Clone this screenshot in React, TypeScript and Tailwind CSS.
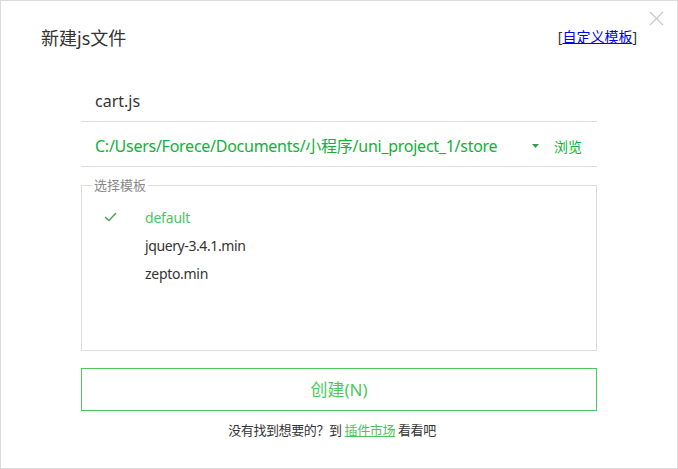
import React from "react";

const font = { fontFamily: '"Noto Sans", "Noto Sans CJK SC", sans-serif' };

export default function App() {
  return (
    <div
      className="relative w-[678px] h-[469px] bg-white border border-[#dcdcdc] overflow-hidden text-[#333]"
      style={font}
    >
      {/* close */}
      <button className="absolute right-[13px] top-[10px] w-[15px] h-[15px]">
        <svg width="15" height="15" viewBox="0 0 15 15">
          <path d="M1 1 L14 14 M14 1 L1 14" stroke="#c8c8c8" strokeWidth="1.2" fill="none" />
        </svg>
      </button>

      <div className="flex items-center justify-between pl-[40px] pr-[40px] pt-[24px] h-[50px]">
        <div className="text-[18px] leading-[24px] text-[#333]">新建js文件</div>
        <div className="text-[14px] leading-[20px] mt-[-2px]">
          <span className="text-[#333]">[</span>
          <a className="text-[#0000ee] underline">自定义模板</a>
          <span className="text-[#333]">]</span>
        </div>
      </div>

      <div className="mx-[80px] mt-[27px]">
        <div className="h-[44px] flex items-center pl-[14px] pt-[3px] border-b border-[#dcdcdc] text-[16px] text-[#333]">
          cart.js
        </div>
        <div className="h-[45px] flex items-center pl-[14px] pt-[4px] border-b border-[#dcdcdc]">
          <span className="flex-1 text-[16px] tracking-[-0.26px] text-[#13b03a] whitespace-nowrap">
            C:/Users/Forece/Documents/小程序/uni_project_1/store
          </span>
          <svg width="7" height="5" viewBox="0 0 7 5" className="mr-[15px]">
            <path d="M0 0 L7 0 L3.5 4 Z" fill="#3a9a4e" />
          </svg>
          <span className="text-[14px] text-[#13b03a] mr-[15px]">浏览</span>
        </div>

        <fieldset className="mt-[9px] h-[175px] border border-[#dcdcdc] px-[10px]">
          <legend className="text-[13px] text-[#888] px-[2px] leading-[18px]">选择模板</legend>
          <div className="flex flex-col pt-[9px]">
            <div className="h-[28px] flex items-center text-[14px] tracking-[-0.2px] text-[#4cc45e]">
              <span className="w-[53px] pl-[12px]">
                <svg width="13" height="10" viewBox="0 0 13 10">
                  <path d="M1 5 L5 8.5 L12 1" stroke="#4aa35a" strokeWidth="1.4" fill="none" />
                </svg>
              </span>
              default
            </div>
            <div className="h-[28px] flex items-center text-[14px] tracking-[-0.4px] text-[#333]">
              <span className="w-[53px]" />
              jquery-3.4.1.min
            </div>
            <div className="h-[28px] flex items-center text-[14px] tracking-[-0.3px] text-[#333]">
              <span className="w-[53px]" />
              zepto.min
            </div>
          </div>
        </fieldset>

        <button className="mt-[17px] w-full h-[43px] border border-[#4cc95d] text-[17px] text-[#4cc95d] flex items-center justify-center">
          创建(N)
        </button>

        <div className="mt-[10px] pr-[14px] text-center text-[13px] tracking-[-0.4px] text-[#333] leading-[18px]">
          没有找到想要的？到 <a className="text-[#4cc45e] underline">插件市场</a> 看看吧
        </div>
      </div>
    </div>
  );
}
